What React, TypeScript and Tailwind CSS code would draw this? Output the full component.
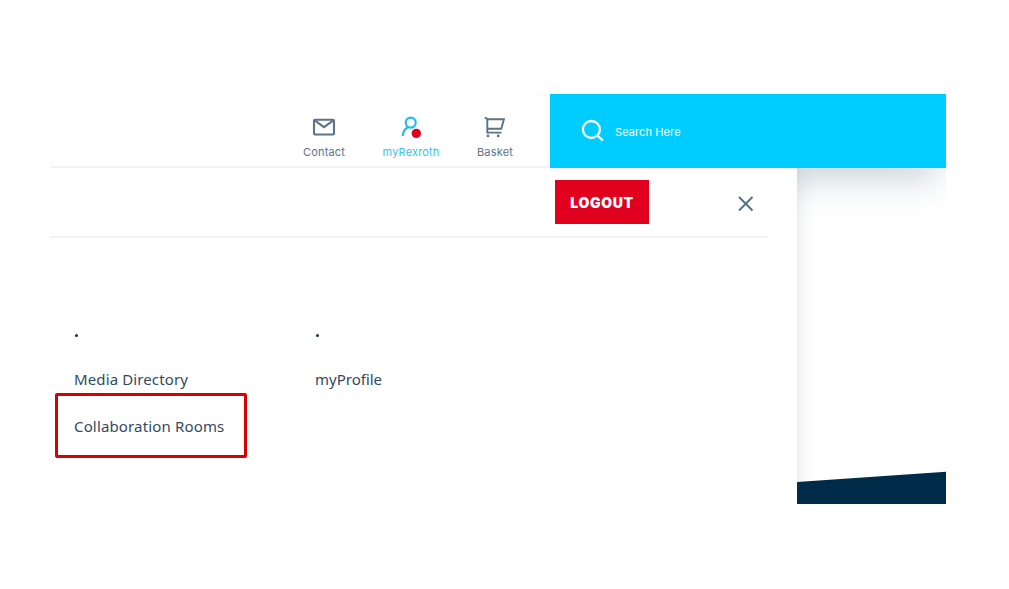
import React from "react";

function NavItem({ label, className, children }: { label: string; className: string; children: React.ReactNode }) {
  return (
    <a className={`flex shrink-0 flex-col items-center ${className}`}>
      <span className="flex h-6 items-center">{children}</span>
      <span className="mt-[5px] whitespace-nowrap text-[11px] leading-4">{label}</span>
    </a>
  );
}

function Header() {
  return (
    <header className="relative z-20 flex h-[75px] w-[896px] pt-px">
      <nav className="flex w-[500px] shrink-0 border-t border-b-2 border-t-[#fafafa] border-b-[#f2f3f3] pt-[20px] pl-[239px] font-['Inter',sans-serif] tracking-[0.16px]">
        <NavItem label="Contact" className="w-[70px] text-[#5b7488]">
          <svg width="24" height="24" viewBox="0 0 24 24" fill="none" stroke="currentColor" strokeWidth="2.1">
            <rect x="2" y="4.7" width="20" height="14.8" rx="1" />
            <path d="M3 5.7l9 6.5 9-6.5" />
          </svg>
        </NavItem>
        <NavItem label="myRexroth" className="ml-4 w-[72px] text-[#3cbfe9]">
          <svg width="24" height="24" viewBox="0 0 24 24" fill="none">
            <circle cx="11.7" cy="7.6" r="5" stroke="#22baea" strokeWidth="2.1" />
            <path d="M9 12.2C6 13.7 4 17 3.7 21" stroke="#22baea" strokeWidth="2.1" />
            <circle cx="17.3" cy="18.4" r="4.7" fill="#e2001f" />
          </svg>
        </NavItem>
        <NavItem label="Basket" className="ml-[17px] w-[62px] text-[#5b7488]">
          <svg width="24" height="24" viewBox="0 0 24 24" fill="none" stroke="currentColor" strokeWidth="1.9">
            <path d="M1.7 2.5l2.6 1.4V17.6h14.2M4.3 4.3h16.6l-2.6 9.4h-14" />
            <circle cx="5" cy="20.9" r="1.4" fill="currentColor" stroke="none" />
            <circle cx="15.2" cy="20.9" r="1.4" fill="currentColor" stroke="none" />
          </svg>
        </NavItem>
      </nav>
      <div className="flex w-[396px] shrink-0 items-center bg-[#00cdff] pl-[31px] text-white">
        <svg width="24" height="24" viewBox="0 0 24 24" fill="none" stroke="currentColor" strokeWidth="2.3">
          <circle cx="10.4" cy="10.5" r="8.5" />
          <path d="M16.4 16.5l5.5 5.2" />
        </svg>
        <span className="ml-[10px] whitespace-nowrap pt-px font-['Inter',sans-serif] text-[11px] leading-4 tracking-[0.1px]">Search Here</span>
      </div>
    </header>
  );
}

function Menu() {
  return (
    <section className="relative z-10 h-[336px] w-[747px] shrink-0 bg-white shadow-[0_0_18px_rgba(60,80,100,0.17)]">
      <div className="flex h-[70px] w-[718px] border-b-2 border-[#f2f3f3] pt-[12px] pl-[505px]">
        <button className="h-[44px] w-[94px] bg-[#e2001f] pt-px font-['Inter',sans-serif] text-[14px] font-black tracking-[0.65px] text-white">LOGOUT</button>
        <button className="mt-[16px] ml-[89px] h-4 w-4 text-[#52708a]" aria-label="Close">
          <svg width="16" height="16" viewBox="0 0 16 16" fill="none" stroke="currentColor" strokeWidth="1.9">
            <path d="M1 1l13.5 13.5M14.5 1L1 14.5" />
          </svg>
        </button>
      </div>
      <div className="flex pt-[96px] pl-[5px] font-['Noto_Sans',sans-serif] text-[15px] leading-5 text-[#304b60]">
        <div className="w-[241px]">
          <div className="ml-[19.5px] h-[3px] w-[3px] rounded-full bg-[#182f41]" />
          <p className="mt-8 pl-[19px] whitespace-nowrap tracking-[0.12px]">Media Directory</p>
          <div className="mt-[4px] flex h-[65px] w-[192px] items-center rounded-[2px] border-3 border-[#d90000] pt-px pl-4 whitespace-nowrap tracking-[0.15px]">Collaboration Rooms</div>
        </div>
        <div className="pl-[19px]">
          <div className="ml-[0.5px] h-[3px] w-[3px] rounded-full bg-[#182f41]" />
          <p className="mt-8 whitespace-nowrap">myProfile</p>
        </div>
      </div>
    </section>
  );
}

export default function App() {
  return (
    <main className="h-[589px] w-[1009px] overflow-hidden bg-white pt-[93px] pl-[50px]">
      <div className="w-[896px] overflow-hidden">
        <Header />
        <div className="flex h-[336px] overflow-hidden">
          <Menu />
          <div className="flex w-[149px] flex-col justify-between">
            <div className="relative h-16 w-full overflow-hidden">
              <div className="absolute -top-10 right-[14px] h-10 w-[300px] shadow-[0_6px_36px_4px_rgba(55,90,110,0.28)]" />
            </div>
            <svg width="149" height="33" viewBox="0 0 149 33" fill="#002b49">
              <path d="M0 11L149 .8V33H0z" />
            </svg>
          </div>
        </div>
      </div>
    </main>
  );
}
